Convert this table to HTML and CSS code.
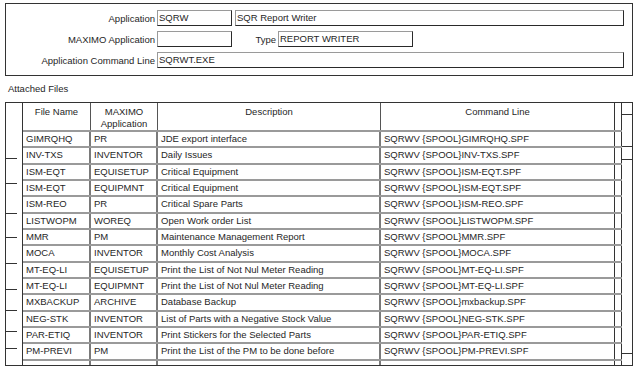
FILE: index.html
```html
<!DOCTYPE html>
<html>
<head>
<meta charset="utf-8">
<link rel="stylesheet" href="styles.css">
</head>
<body>
<div class="form">
  <div class="row">
    <span class="label">Application</span>
    <span class="input w-short">SQRW</span>
    <span class="input w-name">SQR Report Writer</span>
  </div>
  <div class="row">
    <span class="label">MAXIMO Application</span>
    <span class="input w-short"></span>
    <span class="label-type">Type</span>
    <span class="input w-type">REPORT WRITER</span>
  </div>
  <div class="row">
    <span class="label">Application Command Line</span>
    <span class="input w-cmd">SQRWT.EXE</span>
  </div>
</div>

<div class="caption">Attached Files</div>

<div class="table">
  <div class="sel">
    <div class="mark" style="height:56px"></div>
    <div class="mark" style="height:25px"></div>
    <div class="mark" style="height:30px"></div>
    <div class="mark" style="height:24px"></div>
    <div class="mark" style="height:26px"></div>
    <div class="mark" style="height:26px"></div>
    <div class="mark" style="height:21px"></div>
    <div class="mark" style="height:21px"></div>
    <div class="mark" style="height:17px"></div>
  </div>
  <div class="grid">
    <div class="hrow">
      <div class="c c1">File Name</div>
      <div class="c c2">MAXIMO<br>Application</div>
      <div class="c c3">Description</div>
      <div class="c c4">Command Line</div>
      <div class="c c5"></div>
    </div>
    <div class="drow"><div class="c c1">GIMRQHQ</div><div class="c c2">PR</div><div class="c c3">JDE export interface</div><div class="c c4">SQRWV {SPOOL}GIMRQHQ.SPF</div><div class="c c5"></div></div>
    <div class="drow"><div class="c c1">INV-TXS</div><div class="c c2">INVENTOR</div><div class="c c3">Daily Issues</div><div class="c c4">SQRWV {SPOOL}INV-TXS.SPF</div><div class="c c5"></div></div>
    <div class="drow"><div class="c c1">ISM-EQT</div><div class="c c2">EQUISETUP</div><div class="c c3">Critical Equipment</div><div class="c c4">SQRWV {SPOOL}ISM-EQT.SPF</div><div class="c c5"></div></div>
    <div class="drow"><div class="c c1">ISM-EQT</div><div class="c c2">EQUIPMNT</div><div class="c c3">Critical Equipment</div><div class="c c4">SQRWV {SPOOL}ISM-EQT.SPF</div><div class="c c5"></div></div>
    <div class="drow"><div class="c c1">ISM-REO</div><div class="c c2">PR</div><div class="c c3">Critical Spare Parts</div><div class="c c4">SQRWV {SPOOL}ISM-REO.SPF</div><div class="c c5"></div></div>
    <div class="drow"><div class="c c1">LISTWOPM</div><div class="c c2">WOREQ</div><div class="c c3">Open Work order List</div><div class="c c4">SQRWV {SPOOL}LISTWOPM.SPF</div><div class="c c5"></div></div>
    <div class="drow"><div class="c c1">MMR</div><div class="c c2">PM</div><div class="c c3">Maintenance Management Report</div><div class="c c4">SQRWV {SPOOL}MMR.SPF</div><div class="c c5"></div></div>
    <div class="drow"><div class="c c1">MOCA</div><div class="c c2">INVENTOR</div><div class="c c3">Monthly Cost Analysis</div><div class="c c4">SQRWV {SPOOL}MOCA.SPF</div><div class="c c5"></div></div>
    <div class="drow"><div class="c c1">MT-EQ-LI</div><div class="c c2">EQUISETUP</div><div class="c c3">Print the List of Not Nul Meter Reading</div><div class="c c4">SQRWV {SPOOL}MT-EQ-LI.SPF</div><div class="c c5"></div></div>
    <div class="drow"><div class="c c1">MT-EQ-LI</div><div class="c c2">EQUIPMNT</div><div class="c c3">Print the List of Not Nul Meter Reading</div><div class="c c4">SQRWV {SPOOL}MT-EQ-LI.SPF</div><div class="c c5"></div></div>
    <div class="drow"><div class="c c1">MXBACKUP</div><div class="c c2">ARCHIVE</div><div class="c c3">Database Backup</div><div class="c c4">SQRWV {SPOOL}mxbackup.SPF</div><div class="c c5"></div></div>
    <div class="drow"><div class="c c1">NEG-STK</div><div class="c c2">INVENTOR</div><div class="c c3">List of Parts with a Negative Stock Value</div><div class="c c4">SQRWV {SPOOL}NEG-STK.SPF</div><div class="c c5"></div></div>
    <div class="drow"><div class="c c1">PAR-ETIQ</div><div class="c c2">INVENTOR</div><div class="c c3">Print Stickers for the Selected Parts</div><div class="c c4">SQRWV {SPOOL}PAR-ETIQ.SPF</div><div class="c c5"></div></div>
    <div class="drow"><div class="c c1">PM-PREVI</div><div class="c c2">PM</div><div class="c c3">Print the List of the PM to be done before</div><div class="c c4">SQRWV {SPOOL}PM-PREVI.SPF</div><div class="c c5"></div></div>
    <div class="drow last"><div class="c c1"></div><div class="c c2"></div><div class="c c3"></div><div class="c c4"></div><div class="c c5"></div></div>
  </div>
  <div class="scroll">
    <div class="smark" style="height:11px"></div>
    <div class="smark" style="height:31px"></div>
    <div class="smark" style="height:12px"></div>
    <div class="sfill"></div>
    <div class="sbottom"></div>
  </div>
</div>
</body>
</html>
```
FILE: styles.css
```css
html, body {
  margin: 0;
  padding: 0;
  background: #ffffff;
}
body {
  font-family: "Liberation Sans", Arial, sans-serif;
  font-size: 9.5px;
  color: #262626;
  width: 637px;
  height: 370px;
  overflow: hidden;
}
.form {
  margin: 3px 0 0 5px;
  width: 628px;
  height: 73px;
  box-sizing: border-box;
  border: 1px solid #333;
  padding-top: 6px;
  display: flex;
  flex-direction: column;
  gap: 5px;
}
.row {
  display: flex;
  align-items: center;
  height: 16px;
}
.label {
  width: 151px;
  padding-right: 2px;
  text-align: right;
  box-sizing: border-box;
  flex: none;
}
.label-type {
  width: 46px;
  padding-right: 2px;
  text-align: right;
  box-sizing: border-box;
  flex: none;
}
.input {
  height: 16px;
  box-sizing: border-box;
  border-top: 1px solid #9a9a9a;
  border-left: 1px solid #9a9a9a;
  border-right: 1px solid #2a2a2a;
  border-bottom: 1px solid #2a2a2a;
  padding: 1px 0 0 1px;
  line-height: 11px;
  flex: none;
  white-space: nowrap;
}
.w-short { width: 75px; }
.w-name { width: 389px; margin-left: 3px; }
.w-type { width: 135px; }
.w-cmd { width: 467px; }

.caption {
  margin: 6px 0 0 8px;
  height: 14px;
  line-height: 14px;
}

.table {
  margin: 6px 0 0 5px;
  width: 628px;
  height: 264px;
  box-sizing: border-box;
  border: 1px solid #333;
  display: flex;
  overflow: hidden;
}
.sel {
  width: 17px;
  flex: none;
  box-sizing: border-box;
  border-right: 1px solid #333;
  display: flex;
  flex-direction: column;
}
.mark {
  width: 11px;
  flex: none;
  box-sizing: border-box;
  border-bottom: 1px solid #333;
}
.grid {
  flex: none;
  width: 599px;
  display: flex;
  flex-direction: column;
}
.hrow, .drow {
  display: flex;
  box-sizing: border-box;
  border-bottom: 2px solid #9a9a9a;
  flex: none;
}
.hrow {
  height: 29px;
}
.drow {
  height: 16.35px;
}
.drow.last {
  border-bottom: none;
  flex: 1;
}
.c {
  flex: none;
  box-sizing: border-box;
  border-right: 1px solid #555;
  padding-left: 3px;
  white-space: nowrap;
  overflow: hidden;
}
.drow .c {
  line-height: 14px;
  border-right: 2px solid #7a7a7a;
}
.hrow .c {
  text-align: center;
  padding: 3px 0 0;
  line-height: 12px;
}
.c1 { width: 68px; }
.c2 { width: 67px; }
.c3 { width: 223px; }
.c4 { width: 234px; }
.c5 { width: 7px; padding: 0; }
.hrow .c4, .drow .c4 { border-right: 1px solid #333; }
.hrow .c5, .drow .c5 { border-right: 1px solid #333; padding: 0; }
.scroll {
  flex: 1;
  display: flex;
  flex-direction: column;
}
.smark {
  flex: none;
  border-bottom: 1px solid #333;
}
.sfill {
  flex: 1;
}
.sbottom {
  height: 11px;
  flex: none;
  border-top: 1px solid #333;
}
```
